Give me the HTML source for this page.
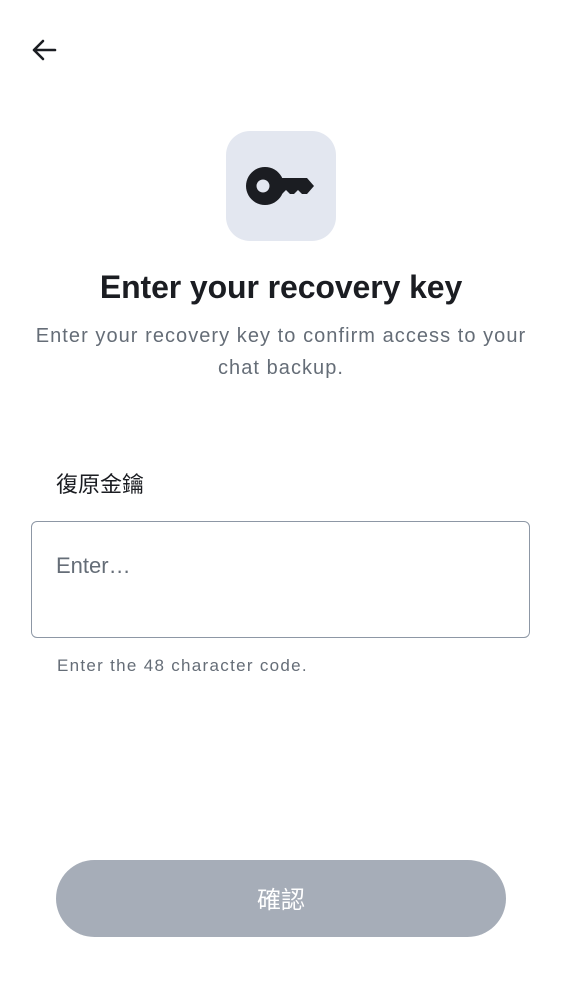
<!DOCTYPE html>
<html><head><meta charset="utf-8"><style>
body{margin:0;width:562px;height:1000px;background:#fff;font-family:"Liberation Sans","Noto Sans CJK TC",sans-serif;position:relative;overflow:hidden}
.a{position:absolute}
</style></head><body>
<svg class="a" style="left:28px;top:36px" width="30" height="30" viewBox="0 0 30 30"><path d="M27 14H6M15 5L6 14L15 23" stroke="#1b1d22" stroke-width="2.6" fill="none" stroke-linecap="round" stroke-linejoin="round"/></svg>
<div class="a" style="left:226px;top:131px;width:110px;height:110px;border-radius:24px;background:#e3e7f0"></div>
<svg class="a" style="left:226px;top:131px" width="110" height="110" viewBox="226 131 110 110">
<path fill="#1b1d22" fill-rule="evenodd" d="M265 167a19 19 0 1 0 0.01 0zM263 179.5a6.5 6.5 0 1 0 0.01 0z"/>
<path fill="#1b1d22" d="M278 178H307L314 186L307 194L302 194L298 190L294 194L290 194L286 190L282 194H278Z"/>
</svg>
<div class="a" style="left:0;top:269px;width:562px;text-align:center;font-size:32px;font-weight:bold;color:#1b1d22;letter-spacing:-0.1px">Enter your recovery key</div>
<div class="a" style="left:0;top:320px;width:562px;text-align:center;font-size:20px;line-height:32px;color:#656d77;letter-spacing:1.05px">Enter your recovery key to confirm access to your<br>chat backup.</div>
<div class="a" style="left:56px;top:467px;font-size:22px;color:#1b1d22">復原金鑰</div>
<div class="a" style="left:31px;top:521px;width:497px;height:115px;border:1.5px solid #8d97a5;border-radius:6px"></div>
<div class="a" style="left:56px;top:553px;font-size:22px;color:#656d77">Enter…</div>
<div class="a" style="left:57px;top:656px;font-size:17px;color:#656d77;letter-spacing:1.3px">Enter the 48 character code.</div>
<div class="a" style="left:56px;top:860px;width:450px;height:77px;border-radius:39px;background:#a6adb8;color:#fff;font-size:24px;text-align:center;line-height:82px">確認</div>
</body></html>
